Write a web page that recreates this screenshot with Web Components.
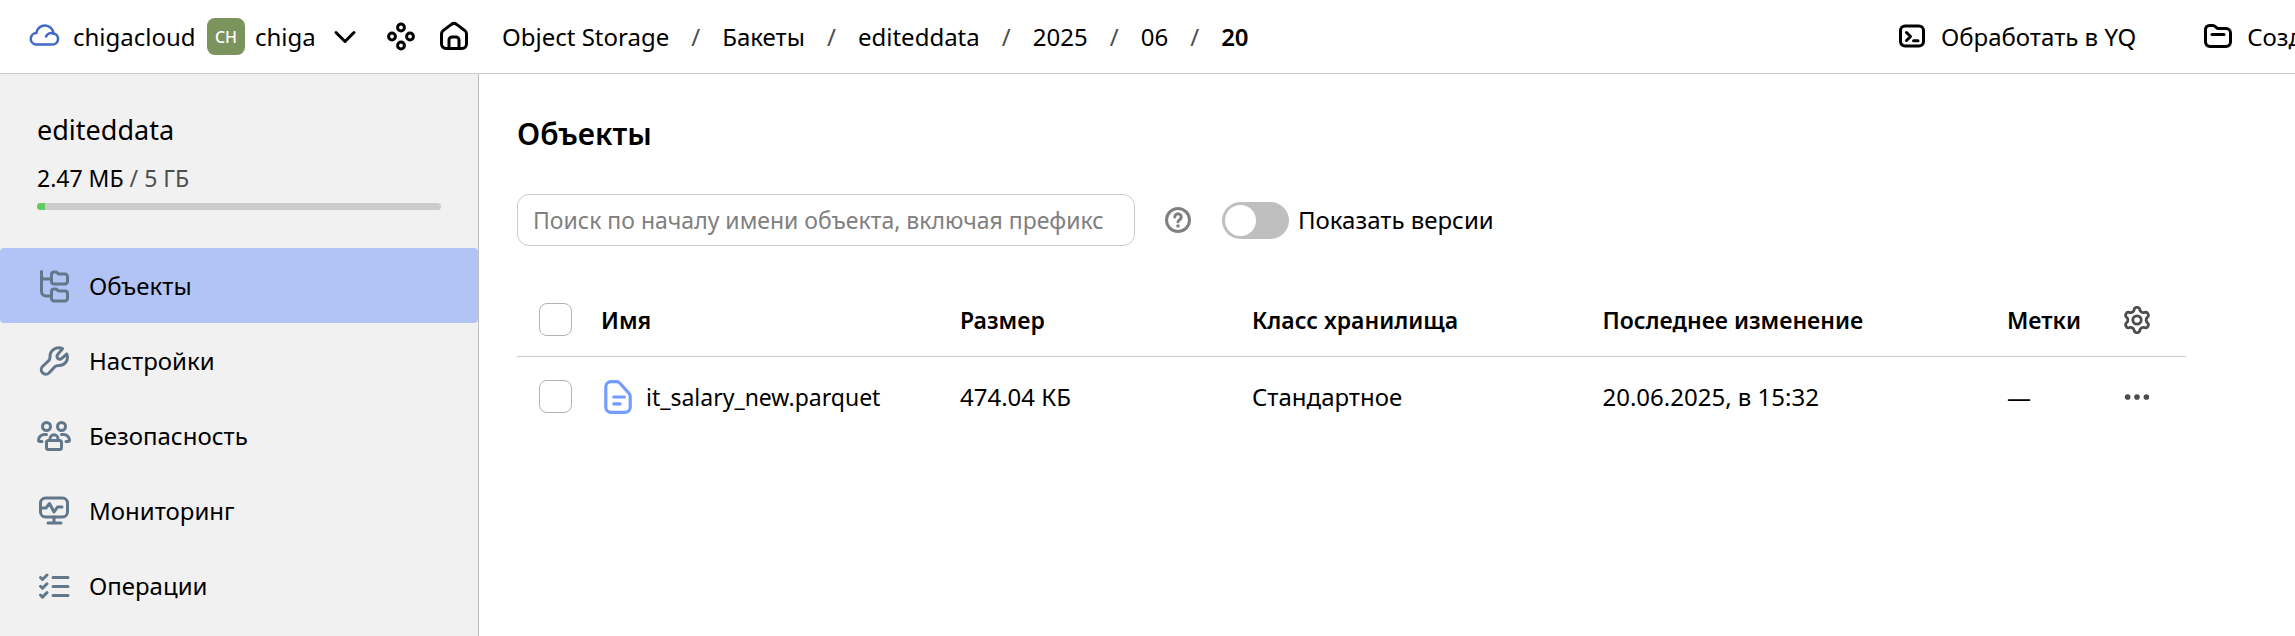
<!DOCTYPE html>
<html lang="ru">
<head>
<meta charset="utf-8">
<title>Object Storage</title>
<style>
  html, body { height: 100%; }
  body {
    margin: 0;
    overflow: hidden;
    background: #fff;
    color: #000;
    font: 24px/32px "Noto Sans", "Open Sans", sans-serif;
  }
</style>
</head>
<body>
<app-shell>
  <top-bar slot="header"></top-bar>
  <side-bar slot="aside" name="editeddata" used="2.47 МБ" total="5 ГБ">
    <nav-item icon="folderTree" active>Объекты</nav-item>
    <nav-item icon="wrench">Настройки</nav-item>
    <nav-item icon="security">Безопасность</nav-item>
    <nav-item icon="monitor">Мониторинг</nav-item>
    <nav-item icon="checks">Операции</nav-item>
  </side-bar>
  <objects-page></objects-page>
</app-shell>

<script>
// Outline of the six-lobed cog, traced around its centre.
function cogPath() {
  const points = [];
  for (let i = 0; i < 120; i++) {
    const t = i / 120 * 2 * Math.PI;
    const r = 10.9 + 1.7 * Math.tanh(1.6 * Math.cos(6 * t)) / Math.tanh(1.6);
    points.push((16 + r * Math.sin(t)).toFixed(2) + ' ' + (16 - r * Math.cos(t)).toFixed(2));
  }
  return 'M' + points.join('L') + 'Z';
}

const ICONS = {
  cloud: '<g transform="translate(0 -2)" stroke-width="2.6"><path d="M7.500 25.500H24.500a5.600 5.600 0 0 0 1-11.100A8.600 8.600 0 0 0 8.400 14 5.800 5.800 0 0 0 7.500 25.500Z"/><path d="M18 17.500a6 6 0 0 1 7.500-3"/></g>',
  chevron: '<path d="M7 11.500l9 9 9-9"/>',
  services: '<circle cx="16" cy="6.500" r="3.400"/><circle cx="16" cy="24.500" r="3.400"/><circle cx="7" cy="15.500" r="3.400"/><circle cx="25" cy="15.500" r="3.400"/>',
  home: '<path d="M3.500 12.800a4 4 0 0 1 1.600-3.200l8.300-6.200a4.300 4.300 0 0 1 5.200 0l8.300 6.200a4 4 0 0 1 1.600 3.200V23a4.500 4.500 0 0 1-4.500 4.500H8A4.500 4.500 0 0 1 3.500 23Z"/><path d="M11 27v-8a3 3 0 0 1 3-3h4a3 3 0 0 1 3 3v8"/>',
  terminal: '<rect x="4.500" y="5" width="23" height="20" rx="4.500"/><path d="M10.500 11.500l4 4-4 4M17.500 19.800h4.500"/>',
  folder: '<path d="M3.500 8.500a4 4 0 0 1 4-4h3.200a4 4 0 0 1 2.800 1.200l1.200 1.200a2 2 0 0 0 1.400.600H24a4.500 4.500 0 0 1 4.500 4.500V21a4.500 4.500 0 0 1-4.500 4.500H8A4.500 4.500 0 0 1 3.500 21Z"/><path d="M10 13.500h12"/>',
  folderTree: '<path d="M3.500 1.500v20a4.500 4.500 0 0 0 4.500 4.500h5M3.500 6a3 3 0 0 0 3 3h6.500"/><path d="M13.500 4.500a2.500 2.500 0 0 1 2.500-2.500h1.500q1 0 1.700.800l.600.700q.500.500 1.200.500h6a2.500 2.500 0 0 1 2.500 2.500v5a2.500 2.500 0 0 1-2.500 2.500H16a2.500 2.500 0 0 1-2.500-2.500Z"/><path d="M13.500 21.500a2.500 2.500 0 0 1 2.500-2.500h1.500q1 0 1.700.800l.600.700q.500.500 1.200.500h6a2.500 2.500 0 0 1 2.500 2.500v5a2.500 2.500 0 0 1-2.500 2.500H16a2.500 2.500 0 0 1-2.500-2.500Z"/>',
  wrench: '<path d="M24.500 3.700A8.700 8.700 0 0 0 12 12c0 1.500-.300 2.700-1.300 3.700L4.500 21.500a4.600 4.600 0 0 0 6.500 6.500l5.800-6.200c1-1 2.200-1.300 3.700-1.300A8.300 8.300 0 0 0 28.800 9l-5 4.400a2.800 2.800 0 0 1-4-4Z"/>',
  security: '<circle cx="8.500" cy="6.500" r="4"/><circle cx="23.500" cy="6.500" r="4"/><path d="M8.500 14.500H7A6 6 0 0 0 .500 20q0 1.500 1.500 1.500H4M23.500 14.500H25a6 6 0 0 1 6.500 5.500q0 1.500-1.500 1.500h-2"/><rect x="8.500" y="20.500" width="15" height="9" rx="2"/><path d="M12 20v-1.200a4 4 0 0 1 8 0V20"/>',
  monitor: '<rect x="2.500" y="3" width="27" height="19" rx="5"/><path d="M4 13h4l3.500-4.500 4.500 8.500 3.500-5h4.500M16 22v5M10 28h13"/>',
  checks: '<path d="M2.500 7.500l2 2L9 5M2.500 16.300l2 2L9 13.800M2.500 25.100l2 2L9 22.600M15 7.500h15M15 16.500h15M15 25.500h15"/>',
  help: '<circle cx="16" cy="16" r="11.500"/><path d="M12.800 13a3.200 3.200 0 1 1 5.200 2.500c-1.200.900-2 1.300-2 2.200"/><circle cx="16" cy="22" r=".8" stroke-width="2"/>',
  file: '<path d="M4.500 6.500a5 5 0 0 1 5-5h5q2 0 3.300 1.500l8.500 9.500q1.200 1.300 1.200 3v10a5 5 0 0 1-5 5h-13a5 5 0 0 1-5-5Z"/><path d="M12 16h10M12 22.500h6"/>',
  gear: `<g stroke-width="2.8"><path d="${cogPath()}"/><circle cx="16" cy="16" r="4.200"/></g>`,
  dots: '<g fill="currentColor" stroke="none"><circle cx="6" cy="16" r="3"/><circle cx="16" cy="16" r="3"/><circle cx="26" cy="16" r="3"/></g>'
};

function define(name, render) {
  customElements.define(name, class extends HTMLElement {
    constructor() { super(); this.attachShadow({ mode: 'open' }); }
    connectedCallback() { this.shadowRoot.innerHTML = render(this); }
  });
}

define('ui-icon', el => `
  <style>
    :host { display: block; flex: none; width: var(--icon-size, 32px); height: var(--icon-size, 32px); }
    svg { display: block; width: 100%; height: 100%; overflow: visible; fill: none; stroke: currentColor;
      stroke-width: 3; stroke-linecap: round; stroke-linejoin: round; }
  </style>
  <svg viewBox="0 0 32 32" aria-hidden="true">${ICONS[el.getAttribute('name')]}</svg>`);

define('app-shell', () => `
  <style>
    :host { display: grid; grid-template: auto minmax(0, 1fr) / 479px minmax(0, 1fr); min-height: 100vh; }
    slot { display: contents; }
    ::slotted([slot=header]) { grid-column: 1 / -1; }
  </style>
  <slot name="header"></slot><slot name="aside"></slot><slot></slot>`);

define('top-bar', () => `
  <style>
    :host { display: flex; align-items: center; height: 73px; min-width: 0; border-bottom: 1px solid #ccc; white-space: nowrap; }
    a, button { color: inherit; font: inherit; text-decoration: none; background: none; border: 0; padding: 0; }
    button, .who { display: flex; align-items: center; }
    .context { display: flex; align-items: center; width: 502px; padding-left: 28px; box-sizing: border-box; }
    .cloud { gap: 13px; width: 179px; }
    .cloud ui-icon { color: #4369c9; }
    .badge { display: grid; place-items: center; width: 38px; height: 37px; border-radius: 8px; background: #7b935c; color: #fff; font-size: 16px; font-weight: 500; }
    .folder { gap: 10px; width: 122px; }
    .chevron { margin-right: 24px; }
    .services { margin-right: 21px; }
    nav { flex: 1; min-width: 0; }
    ol { display: flex; margin: 0; padding: 0; list-style: none; }
    li + li::before { content: "/"; display: inline-block; width: 53px; text-align: center; color: #4d4d4d; }
    [aria-current] { font-weight: 600; }
    .actions { display: flex; flex: 0 0 399px; gap: 66px; overflow: hidden; }
    .actions button { flex: none; gap: 13px; }
  </style>
  <div class="context">
    <a class="who cloud" href="#cloud"><ui-icon name="cloud"></ui-icon>chigacloud</a>
    <a class="who folder" href="#folder"><span class="badge">CH</span>chiga</a>
    <button class="chevron" aria-label="Выбрать каталог"><ui-icon name="chevron"></ui-icon></button>
    <button class="services" aria-label="Сервисы"><ui-icon name="services"></ui-icon></button>
    <a href="#home" aria-label="Главная"><ui-icon name="home"></ui-icon></a>
  </div>
  <nav aria-label="Путь"><ol>
    <li><a href="#storage">Object Storage</a></li>
    <li><a href="#buckets">Бакеты</a></li>
    <li><a href="#bucket">editeddata</a></li>
    <li><a href="#2025">2025</a></li>
    <li><a href="#06">06</a></li>
    <li><a href="#20" aria-current="page">20</a></li>
  </ol></nav>
  <div class="actions">
    <button><ui-icon name="terminal"></ui-icon>Обработать в YQ</button>
    <button><ui-icon name="folder"></ui-icon>Создать папку</button>
  </div>`);

define('side-bar', el => `
  <style>
    :host { display: block; background: #f1f1f1; border-right: 1px solid #bfbfbf; }
    header { padding: 38px 37px; }
    h2 { margin: 0 0 14px; font-size: 27px; line-height: 36px; font-weight: 400; }
    p { margin: 0; color: #4d4d4d; font-size: 23px; }
    b { color: #000; font-weight: 400; }
    .meter { height: 7px; margin-top: 9px; border-radius: 4px; background: #ccc; overflow: hidden; }
    .meter i { display: block; width: 2%; height: 100%; background: #62cb62; }
  </style>
  <header>
    <h2>${el.getAttribute('name')}</h2>
    <p><b>${el.getAttribute('used')}</b> / ${el.getAttribute('total')}</p>
    <div class="meter"><i></i></div>
  </header>
  <nav aria-label="Бакет"><slot></slot></nav>`);

define('nav-item', el => `
  <style>
    :host { display: block; }
    :host([active]) { background: #b2c4f6; border-radius: 4px; }
    a { display: flex; align-items: center; gap: 19px; height: 75px; padding-left: 38px; color: inherit; text-decoration: none; }
    ui-icon { color: #627789; }
  </style>
  <a href="#${el.getAttribute('icon')}"><ui-icon name="${el.getAttribute('icon')}"></ui-icon><span><slot></slot></span></a>`);

define('search-field', el => `
  <style>
    :host { display: block; width: 618px; }
    input { box-sizing: border-box; width: 100%; height: 52px; padding: 0 15px; border: 1px solid #ccc; border-radius: 12px; background: #fff; color: #000; font: inherit; font-size: 23px; outline: 0; }
    input::placeholder { color: #808080; opacity: 1; }
  </style>
  <input type="text" aria-label="Поиск" placeholder="${el.getAttribute('placeholder')}">`);

define('toggle-switch', () => `
  <style>
    :host { display: block; }
    label { display: flex; align-items: center; gap: 9px; }
    input { appearance: none; width: 67px; height: 37px; margin: 0; padding: 3px; border-radius: 19px; background: #bfbfbf; box-sizing: border-box; }
    input::before { content: ""; display: block; width: 31px; height: 31px; border-radius: 50%; background: #fff; }
    input:checked { background: #4369c9; }
    input:checked::before { margin-left: auto; }
  </style>
  <label><input type="checkbox" role="switch"><slot></slot></label>`);

define('check-box', el => `
  <style>
    :host { display: block; }
    input { appearance: none; display: block; width: 33px; height: 33px; margin: 0; box-sizing: border-box; border: 1px solid #b3b3b3; border-radius: 8px; background: #fff; }
    input:checked { background: #4369c9; }
  </style>
  <input type="checkbox" aria-label="${el.getAttribute('label')}">`);

define('objects-table', () => `
  <style>
    :host { display: block; }
    table { width: 100%; table-layout: fixed; border-collapse: collapse; white-space: nowrap; }
    th, td { padding: 0; text-align: left; vertical-align: middle; }
    th { height: 73px; font-size: 23px; font-weight: 600; }
    td { height: 79px; }
    thead tr { border-bottom: 1px solid #ccc; }
    .check { width: 84px; }
    .name { width: 359px; }
    .size { width: 292px; }
    .class { width: 21%; }
    .tags { width: 81px; }
    .more { width: 98px; }
    check-box { margin-left: 22px; }
    a { display: flex; align-items: center; gap: 11px; color: inherit; font-size: 23px; text-decoration: none; }
    a ui-icon { --icon-size: 34px; color: #739cff; }
    button { display: block; margin: 0 auto; padding: 0; border: 0; background: none; color: #4d4d4d; }
    td ui-icon[name=dots] { --icon-size: 30px; }
  </style>
  <table>
    <thead><tr>
      <th class="check"><check-box label="Выбрать все"></check-box></th>
      <th class="name">Имя</th><th class="size">Размер</th><th class="class">Класс хранилища</th>
      <th>Последнее изменение</th><th class="tags">Метки</th>
      <th class="more"><button aria-label="Колонки"><ui-icon name="gear"></ui-icon></button></th>
    </tr></thead>
    <tbody><tr>
      <td><check-box label="Выбрать объект"></check-box></td>
      <td><a href="#file"><ui-icon name="file"></ui-icon>it_salary_new.parquet</a></td>
      <td>474.04 КБ</td><td>Стандартное</td><td>20.06.2025, в 15:32</td><td>—</td>
      <td class="more"><button aria-label="Действия"><ui-icon name="dots"></ui-icon></button></td>
    </tr></tbody>
  </table>`);

define('objects-page', () => `
  <style>
    :host { display: block; min-width: 0; padding: 40px 109px 0 38px; }
    h1 { margin: 0 0 40px; font-size: 30px; line-height: 40px; font-weight: 600; }
    .filters { display: flex; align-items: center; margin-bottom: 37px; }
    .help { display: block; margin: 0 28px 0 27px; padding: 0; border: 0; background: none; color: #808080; }
  </style>
  <h1>Объекты</h1>
  <div class="filters">
    <search-field placeholder="Поиск по началу имени объекта, включая префикс"></search-field>
    <button class="help" aria-label="Справка"><ui-icon name="help"></ui-icon></button>
    <toggle-switch>Показать версии</toggle-switch>
  </div>
  <objects-table></objects-table>`);
</script>
</body>
</html>
